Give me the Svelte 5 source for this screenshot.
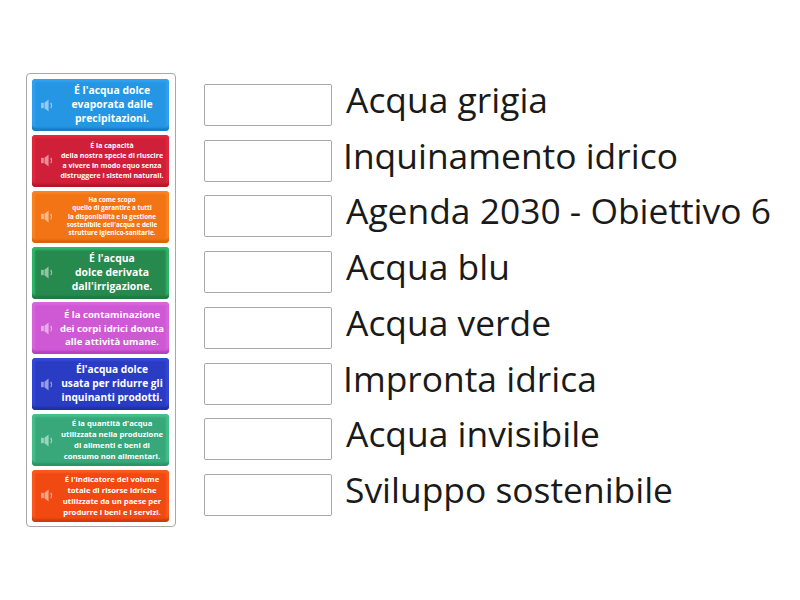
<script>
	const cards = [
		{ color: 'blue', size: 'lg', lines: ["É l'acqua dolce", 'evaporata dalle', 'precipitazioni.'] },
		{ color: 'red', size: 'sm', lines: ['É la capacità', 'della nostra specie di riuscire', 'a vivere in modo equo senza', 'distruggere i sistemi naturali.'] },
		{ color: 'orange', size: 'xs', lines: ['Ha come scopo', 'quello di garantire a tutti', 'la disponibilità e la gestione', "sostenibile dell'acqua e delle", 'strutture igienico-sanitarie.'] },
		{ color: 'green', size: 'lg', lines: ["É l'acqua", 'dolce derivata', "dall'irrigazione."] },
		{ color: 'pink', size: 'md', lines: ['É la contaminazione', 'dei corpi idrici dovuta', 'alle attività umane.'] },
		{ color: 'indigo', size: 'md2', lines: ["Él'acqua dolce", 'usata per ridurre gli', 'inquinanti prodotti.'] },
		{ color: 'teal', size: 'sm2', lines: ["É la quantità d'acqua", 'utilizzata nella produzione', 'di alimenti e beni di', 'consumo non alimentari.'] },
		{ color: 'vermilion', size: 'sm2', lines: ["É l'indicatore del volume", 'totale di risorse idriche', 'utilizzate da un paese per', 'produrre i beni e i servizi.'] }
	];

	const answers = [
		{ text: 'Acqua grigia', nudge: 2 },
		{ text: 'Inquinamento idrico', nudge: 0 },
		{ text: 'Agenda 2030 - Obiettivo 6', nudge: 2 },
		{ text: 'Acqua blu', nudge: 2 },
		{ text: 'Acqua verde', nudge: 2 },
		{ text: 'Impronta idrica', nudge: 0 },
		{ text: 'Acqua invisibile', nudge: 2 },
		{ text: 'Sviluppo sostenibile', nudge: 1 }
	];
</script>

<main class="page">
	<div class="panel">
		{#each cards as card}
			<div class="card {card.color}">
				<svg class="speaker" viewBox="0 0 14 14" aria-hidden="true">
					<path d="M1 4.5h2.5v5H1z" fill="currentColor" />
					<path d="M4.2 4.5 8 1.5v11L4.2 9.5z" fill="currentColor" />
					<path d="M10 4.5c1 1.5 1 3.5 0 5" fill="none" stroke="currentColor" stroke-width="1.1" />
				</svg>
				<div class="label {card.size}">
					{#each card.lines as line}
						<span>{line}</span>
					{/each}
				</div>
			</div>
		{/each}
	</div>

	<div class="answers">
		{#each answers as answer}
			<div class="row">
				<div class="slot"></div>
				<span class="answer" class:nudge1={answer.nudge === 1} class:nudge2={answer.nudge === 2}>{answer.text}</span>
			</div>
		{/each}
	</div>
</main>

<style>
	:global(body) {
		background: #fff;
		font-family: "Open Sans", sans-serif;
	}

	.page {
		display: flex;
		align-items: flex-start;
		gap: 28px;
		width: 800px;
		height: 600px;
		box-sizing: border-box;
		padding: 73px 0 0 26px;
		overflow: hidden;
	}

	.panel {
		display: flex;
		flex-direction: column;
		gap: 3.85px;
		box-sizing: border-box;
		width: 150px;
		height: 454px;
		padding: 5px 6px 5px 5px;
		border: 1px solid #a8a8a8;
		border-radius: 4px;
	}

	.card {
		display: flex;
		align-items: center;
		flex: none;
		height: 52px;
		box-sizing: border-box;
		border-radius: 4px;
		color: #fff;
		background: var(--inner);
		box-shadow:
			inset 0 -4px 2px -1px var(--base),
			inset 0 4px 2px -1px var(--rim),
			inset 4px 0 2px -1px var(--rim),
			inset -4px 0 2px -1px var(--rim);
	}

	.blue { --rim: #30a2f0; --inner: #2596e4; --base: #1a7cc4; }
	.red { --rim: #e0293f; --inner: #d01f38; --base: #b5162c; }
	.orange { --rim: #fa8322; --inner: #f27414; --base: #d9640c; }
	.green { --rim: #2eb86a; --inner: #26894e; --base: #1d7a45; }
	.pink { --rim: #d866dc; --inner: #cf58d4; --base: #b840c0; }
	.indigo { --rim: #3448d8; --inner: #2a3cc4; --base: #2030a4; }
	.teal { --rim: #46bf8c; --inner: #38a87a; --base: #2c9468; }
	.vermilion { --rim: #fa5a1e; --inner: #f04a12; --base: #d03c0c; }

	.speaker {
		flex: none;
		width: 15px;
		height: 15px;
		margin-left: 8px;
		color: rgba(255, 255, 255, 0.5);
	}

	.label {
		display: flex;
		flex-direction: column;
		align-items: center;
		flex: 1;
		min-width: 0;
		font-weight: 700;
		text-align: center;
		white-space: nowrap;
	}

	.lg { font-size: 10.4px; line-height: 14px; transform: translateY(-1px); }
	.md { font-size: 9.6px; line-height: 13.5px; }
	.md2 { font-size: 10.2px; line-height: 14px; transform: translateY(-1px); }
	.sm { font-size: 7px; line-height: 9.7px; }
	.sm2 { font-size: 7.7px; line-height: 11px; }
	.xs { font-size: 6.3px; line-height: 8.3px; }

	.answers {
		display: flex;
		flex-direction: column;
		gap: 13.72px;
		padding-top: 11px;
	}

	.row {
		display: flex;
		align-items: center;
		height: 42px;
	}

	.slot {
		flex: none;
		width: 128px;
		height: 42px;
		box-sizing: border-box;
		border: 1px solid #a8a8a8;
		border-radius: 2px;
		background: #fff;
	}

	.answer {
		margin-left: 11px;
		font-size: 35.4px;
		line-height: 42px;
		color: #1a1a1a;
		white-space: nowrap;
		transform: translateY(-6px);
	}

	.nudge1 { margin-left: 13px; }
	.nudge2 { margin-left: 14px; }
</style>
